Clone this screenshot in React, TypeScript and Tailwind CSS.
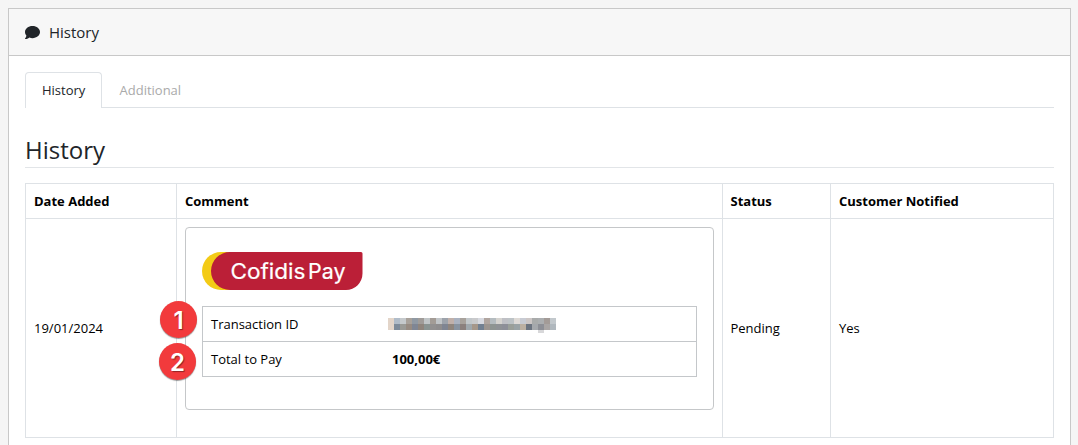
import type { ReactNode } from "react";
import { FaComment } from "react-icons/fa6";

const topRow = [
  "#e3d5c9", "#b0bcc9", "#c5c9cc", "#a8a19a", "#9099a3", "#a09c99", "#c0c5c7", "#a39c96", "#c0c4c7", "#9da3ab",
  "#c0b0aa", "#aab2c0", "#a8a29c", "#c2c7ca", "#c9cacc", "#d7d9e0", "#b0a59f", "#b5bcc0", "#d5d3cf", "#bfc0c5",
  "#bdc3c6", "#dedad6", "#c8cbd3", "#ccc6c5", "#a9abab", "#abaeb0", "#a39b97", "#c2c8cc",
];
const bottomRow = [
  "#e3d5c9", "#7d8b9a", "#9a9a96", "#978b82", "#7f8694", "#8f857d", "#8a9492", "#929090", "#8f8d8e", "#7f8592",
  "#8f857d", "#8893a0", "#8b807d", "#a0a8ad", "#a5978a", "#728091", "#9c9590", "#8e9492", "#8f9296", "#8d8f98",
  "#9a9f99", "#9aa3a5", "#bcb0a2", "#6c7480", "#a5a8ac", "#8d8f96", "#a9a5a4", "#b0b8be",
];

function RedactedId() {
  return (
    <svg className="block" width="168" height="15" shapeRendering="crispEdges" role="img" aria-label="Hidden transaction ID">
      {topRow.map((c, i) => (
        <rect key={i} x={i * 6} y="0" width="6" height="6" fill={c} />
      ))}
      {bottomRow.map((c, i) => (
        <rect key={i} x={i * 6} y="6" width="6" height="6" fill={c} />
      ))}
      <rect x="150" y="12" width="6" height="3" fill="#d8d8da" />
    </svg>
  );
}

function CofidisLogo() {
  return (
    <svg className="block" width="161" height="38" viewBox="0 0 161 38">
      <path d="M19 0H40V38H19A19 19 0 0 1 19 0Z" fill="#f3cb16" />
      <path d="M28 0H159Q160.500 0 160.500 1.500V21.500A16.500 16.500 0 0 1 144 38H28A19 19 0 0 1 28 0Z" fill="#bb1f37" />
      <g fill="#fff" stroke="#fff" strokeWidth="0.200" fontFamily="Inter, sans-serif" fontSize="21">
        <text x="28.500" y="26.600" textLength="75" lengthAdjust="spacingAndGlyphs">
          Cofidis
        </text>
        <text x="106" y="26.600" textLength="37.500" lengthAdjust="spacingAndGlyphs">
          Pay
        </text>
      </g>
    </svg>
  );
}

function Marker({ n, place }: { n: number; place: string }) {
  return (
    <span
      className={`absolute flex size-[37px] items-center justify-center rounded-full bg-[#f23a3c] pt-0.5 font-['Inter',sans-serif] text-[24px] leading-none font-semibold text-white shadow-[0_1px_1px_rgba(0,0,0,0.4)] [text-shadow:1px_1px_1px_rgba(0,0,0,0.4)] ${place}`}
    >
      {n}
    </span>
  );
}

function HeadCell({ children }: { children: ReactNode }) {
  return <div className="border-r border-b border-[#dee2e6] px-2 pt-2 pb-[7px] font-bold">{children}</div>;
}

export default function App() {
  return (
    <main className="h-[445px] overflow-hidden bg-[#f5f5f5] px-2 pt-2 font-['Open_Sans','Noto_Sans',sans-serif] text-[13px] leading-[19.500px] text-black">
      <section className="h-[500px] w-[1063px] border border-[#c8c8c8] bg-white">
        <header className="flex h-[47px] items-center gap-[9px] border-b border-[#c8c8c8] bg-[#f7f7f7] px-4 text-[15px] text-[#212529]">
          <FaComment className="size-[15px]" />
          <h1 className="pt-0.5">History</h1>
        </header>

        <div className="px-4 pt-4">
          <nav className="flex h-9 border-b border-[#dee2e6]">
            <a className="-mb-px h-9 w-[77px] rounded-t border border-b-0 border-[#dee2e6] bg-white px-4 pt-2 text-[#212529]">History</a>
            <a className="px-[17.500px] pt-[9px] text-[#aaa]">Additional</a>
          </nav>

          <h2 className="mt-[27px] h-[33px] border-b border-[#e2e5e8] text-2xl leading-[29px] text-[#212529]">History</h2>

          <div className="mt-[15px] grid grid-cols-[151px_546px_108px_223px] grid-rows-[35px_219px] border-t border-l border-[#dee2e6]">
            <HeadCell>Date Added</HeadCell>
            <HeadCell>Comment</HeadCell>
            <HeadCell><span className="-ml-[0.5px]">Status</span></HeadCell>
            <HeadCell>Customer Notified</HeadCell>

            <div className="flex items-center border-r border-b border-[#dee2e6] px-2 pt-0.5">19/01/2024</div>
            <div className="relative border-r border-b border-[#dee2e6] p-2">
              <div className="h-[183px] w-[529px] rounded border border-[#c5c7c9] px-4 pt-6">
                <CofidisLogo />
                <div className="mt-4 grid grid-cols-[177px_316px] grid-rows-[35px_35px] border border-b-0 border-[#c4c7ca]">
                  <div className="border-b border-[#c4c7ca] px-2 pt-2">Transaction ID</div>
                  <div className="border-b border-[#c4c7ca] pt-[11px] pl-2">
                    <RedactedId />
                  </div>
                  <div className="border-b border-[#c4c7ca] px-2 pt-2">Total to Pay</div>
                  <div className="border-b border-[#c4c7ca] pt-2 pl-3 font-bold">100,00€</div>
                </div>
              </div>
              <Marker n={1} place="top-[82px] -left-[17px]" />
              <Marker n={2} place="top-[124px] -left-[18px]" />
            </div>
            <div className="flex items-center border-r border-b border-[#dee2e6] pt-0.5 pr-2 pl-[7.500px]">Pending</div>
            <div className="flex items-center border-r border-b border-[#dee2e6] px-2 pt-0.5">Yes</div>
          </div>
        </div>
      </section>
    </main>
  );
}
